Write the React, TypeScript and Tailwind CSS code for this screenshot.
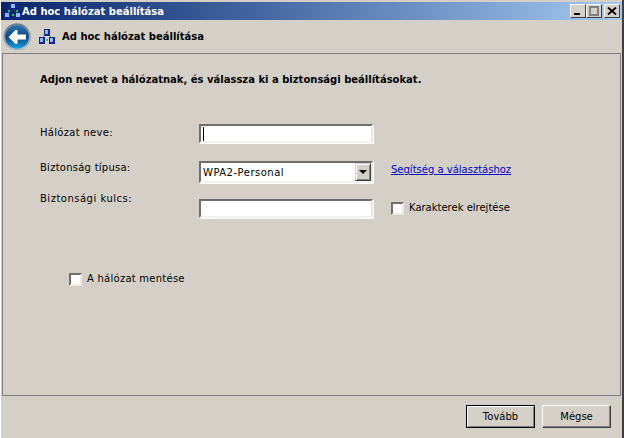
const FONT = "font-['DejaVu_Sans','Liberation_Sans',sans-serif]";

function NetIcon({ className }: { className: string }) {
  return (
    <svg viewBox="0 0 18 16" className={className} shapeRendering="crispEdges">
      <rect x="5.5" y="0" width="7" height="7" fill="#14248a" />
      <rect x="6.5" y="1" width="4" height="4" fill="#8fb8f5" />
      <rect x="0" y="9" width="7" height="7" fill="#14248a" />
      <rect x="1" y="10" width="4" height="4" fill="#8fb8f5" />
      <rect x="11" y="9" width="7" height="7" fill="#14248a" />
      <rect x="12" y="10" width="4" height="4" fill="#8fb8f5" />
      <rect x="4" y="7" width="2" height="2" fill="#18c964" />
      <rect x="12" y="7" width="2" height="2" fill="#18c964" />
      <rect x="8" y="11" width="2" height="2" fill="#18c964" />
    </svg>
  );
}

function BackButton() {
  return (
    <svg viewBox="0 0 28 28" className="w-[28px] h-[28px]">
      <defs>
        <linearGradient id="backFill" x1="0" y1="0" x2="0" y2="1">
          <stop offset="0%" stopColor="#2a78b8" />
          <stop offset="50%" stopColor="#06487f" />
          <stop offset="100%" stopColor="#18a0e8" />
        </linearGradient>
        <linearGradient id="backRing" x1="0" y1="0" x2="0" y2="1">
          <stop offset="0%" stopColor="#6f7c88" />
          <stop offset="100%" stopColor="#b4c2cc" />
        </linearGradient>
      </defs>
      <circle cx="14" cy="14" r="13.8" fill="url(#backRing)" />
      <circle cx="14" cy="14" r="11.8" fill="url(#backFill)" />
      <path d="M5.5 14 L12.5 7 L14.5 7 L14.5 11.5 L23 11.5 L23 16.5 L14.5 16.5 L14.5 21 L12.5 21 Z" fill="#fff" />
    </svg>
  );
}

function CaptionButton({ children }: { children: React.ReactNode }) {
  return (
    <div className="w-[16px] h-[14px] bg-[#d4d0c8] border border-t-white border-l-white border-r-[#404040] border-b-[#404040] flex items-center justify-center">
      {children}
    </div>
  );
}

function Checkbox() {
  return <div className="w-[13px] h-[13px] bg-white border-2 border-t-[#6e6e6e] border-l-[#6e6e6e] border-r-[#eceae5] border-b-[#eceae5]" />;
}

function Sunken({ className, children }: { className: string; children?: React.ReactNode }) {
  return (
    <div className={`${className} bg-white border-2 border-t-[#6e6e6e] border-l-[#6e6e6e] border-r-[#e8e6e0] border-b-[#f4f3ef] shadow-[1px_1px_0_#fff]`}>
      {children}
    </div>
  );
}

function DialogButton({ label, isDefault }: { label: string; isDefault?: boolean }) {
  return (
    <div
      className={`w-[69px] h-[23px] flex items-center justify-center bg-[#d4d0c8] text-[10px] text-black border ${
        isDefault
          ? "border-black shadow-[inset_1px_1px_0_#fff,inset_-1px_-1px_0_#808080]"
          : "border-t-white border-l-white border-r-[#404040] border-b-[#404040] shadow-[inset_-1px_-1px_0_#808080]"
      }`}
    >
      {label}
    </div>
  );
}

export default function App() {
  return (
    <div className={`${FONT} w-[624px] h-[438px] bg-[#d4d0c8] flex flex-col overflow-hidden border-l border-l-white border-r-2 border-r-[#404040] text-[10px] text-black`}>
      {/* title bar */}
      <div className="h-[18px] mt-[2px] shrink-0 flex items-center bg-gradient-to-r from-[#0a246a] to-[#a6caf0] pl-[3px] pr-[2px]">
        <NetIcon className="w-[18px] h-[16px]" />
        <span className="text-white font-bold">Ad hoc hálózat beállítása</span>
        <div className="ml-auto flex items-center">
          <CaptionButton>
            <div className="w-[6px] h-[2px] bg-black mt-[6px] -ml-[2px]" />
          </CaptionButton>
          <CaptionButton>
            <div className="w-[10px] h-[10px] border-2 border-[#808080]" />
          </CaptionButton>
          <div className="ml-[2px]">
            <CaptionButton>
              <svg viewBox="0 0 10 8" className="w-[10px] h-[8px]">
                <path d="M1 0.5 L9 7.5 M9 0.5 L1 7.5" stroke="#000" strokeWidth="1.8" />
              </svg>
            </CaptionButton>
          </div>
        </div>
      </div>

      {/* header */}
      <div className="h-[33px] shrink-0 flex items-center pl-[2px]">
        <BackButton />
        <NetIcon className="ml-[8px] w-[16px] h-[15px]" />
        <span className="ml-[7px] font-bold">Ad hoc hálózat beállítása</span>
      </div>

      {/* content panel */}
      <div className="h-[343px] shrink-0 ml-[1px] mr-[1px] border border-[#808080] pl-[37px] pt-[18px] flex flex-col">
        <p className="font-bold leading-[16px]">Adjon nevet a hálózatnak, és válassza ki a biztonsági beállításokat.</p>

        <div className="mt-[36px] grid grid-cols-[159px_174px_18px_auto] items-start">
          <span className="mt-[2px] leading-[14px] tracking-[0.3px]">Hálózat neve:</span>
          <Sunken className="w-[174px] h-[19px] flex items-center pl-[2px]">
            <div className="w-[1px] h-[14px] bg-black" />
          </Sunken>
          <div />
          <div />

          <span className="mt-[18px] leading-[14px] tracking-[0.25px]">Biztonság típusa:</span>
          <Sunken className="mt-[18px] w-[174px] h-[22px] flex items-center justify-between">
            <span className="ml-[2px] tracking-[0.5px]">WPA2-Personal</span>
            <div className="w-[16px] h-[18px] bg-[#d4d0c8] border border-t-[#d4d0c8] border-l-[#d4d0c8] border-r-[#404040] border-b-[#404040] shadow-[inset_1px_1px_0_#fff,inset_-1px_-1px_0_#808080] flex items-center justify-center">
              <div className="w-0 h-0 border-x-[4px] border-x-transparent border-t-[4px] border-t-black" />
            </div>
          </Sunken>
          <div />
          <a className="mt-[20px] leading-[14px] text-[#0000cc] underline">Segítség a választáshoz</a>

          <span className="mt-[9px] leading-[14px] tracking-[0.5px]">Biztonsági kulcs:</span>
          <Sunken className="mt-[16px] w-[174px] h-[19px]" />
          <div />
          <div className="mt-[18px] flex items-center gap-[5px]">
            <Checkbox />
            <span className="leading-[14px]">Karakterek elrejtése</span>
          </div>
        </div>

        <div className="mt-[54px] ml-[29px] flex items-center gap-[5px]">
          <Checkbox />
          <span className="leading-[14px] tracking-[0.25px]">A hálózat mentése</span>
        </div>
      </div>

      {/* footer */}
      <div className="flex justify-end gap-[7px] pt-[9px] pr-[11px]">
        <DialogButton label="Tovább" isDefault />
        <DialogButton label="Mégse" />
      </div>
    </div>
  );
}
